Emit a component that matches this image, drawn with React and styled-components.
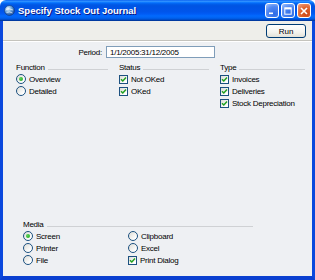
import React from "react";
import styled, { createGlobalStyle } from "styled-components";

const GlobalStyle = createGlobalStyle`
  html, body {
    margin: 0;
    padding: 0;
    background: #ffffff;
  }
  body {
    font-family: "Liberation Sans", Arial, sans-serif;
  }
`;

const Window = styled.div`
  width: 315px;
  height: 280px;
  display: flex;
  flex-direction: column;
`;

const TitleBar = styled.div`
  height: 21px;
  flex: none;
  display: flex;
  align-items: center;
  padding: 0 4px;
  border-radius: 6px 6px 0 0;
  background: linear-gradient(
    to bottom,
    #0058ee 0%,
    #3593ff 5%,
    #288eff 8%,
    #127dff 11%,
    #036ffc 14%,
    #0262ee 18%,
    #0057e5 24%,
    #0054e3 30%,
    #0055eb 56%,
    #005bf5 66%,
    #026afe 76%,
    #0062ef 86%,
    #0052d6 92%,
    #0040ab 96%,
    #003092 100%
  );
`;

const TitleText = styled.span`
  margin-left: 3px;
  color: #ffffff;
  font-weight: bold;
  font-size: 9.5px;
  text-shadow: 1px 1px 0 #0a1883;
  white-space: nowrap;
`;

const Controls = styled.div`
  margin-left: auto;
  display: flex;
  gap: 2px;
`;

const CtrlButton = styled.div`
  width: 14px;
  height: 15px;
  box-sizing: border-box;
  border: 1px solid #ffffff;
  border-radius: 3px;
  display: flex;
  align-items: center;
  justify-content: center;
  background: ${(p) =>
    p.$close
      ? "radial-gradient(circle at 70% 75%, #cc4616 0%, #e0652f 50%, #f3a78a 100%)"
      : "radial-gradient(circle at 70% 75%, #2d6be6 0%, #4f87f2 55%, #a8c6fb 100%)"};
`;

const Frame = styled.div`
  flex: 1;
  display: flex;
  flex-direction: column;
  border-left: 3px solid #0a48dd;
  border-right: 3px solid #0a48dd;
  border-bottom: 4px solid #0a3fd0;
  min-height: 0;
`;

const Toolbar = styled.div`
  height: 20px;
  flex: none;
  display: flex;
  justify-content: flex-end;
  align-items: flex-start;
  padding: 3px 6px 0 0;
  box-sizing: border-box;
  background: #eeeeea;
  border-bottom: 1px solid #c4c3bd;
`;

const RunButton = styled.div`
  width: 40px;
  height: 14px;
  box-sizing: border-box;
  border: 1px solid #003c74;
  border-radius: 3px;
  background: linear-gradient(to bottom, #ffffff 0%, #f4f3ee 60%, #e3e1d8 100%);
  font-size: 8px;
  color: #000;
  display: flex;
  align-items: center;
  justify-content: center;
`;

const Body = styled.div`
  flex: 1;
  display: flex;
  flex-direction: column;
  padding-top: 4px;
  background: #eef0f3;
  border-top: 1px solid #ffffff;
  font-size: 8px;
  letter-spacing: -0.25px;
  color: #000;
`;

const PeriodRow = styled.div`
  display: flex;
  align-items: center;
  height: 12px;
`;

const PeriodLabel = styled.span`
  width: 99px;
  text-align: right;
  margin-right: 4px;
`;

const Field = styled.div`
  width: 109px;
  height: 12px;
  box-sizing: border-box;
  border: 1px solid #7f9db9;
  background: #ffffff;
  padding-left: 3px;
  display: flex;
  align-items: center;
`;

const Sections = styled.div`
  margin-top: 4px;
  padding: 0 7px 0 13px;
  display: grid;
  grid-template-columns: 92px 90px 1fr;
  column-gap: 11px;
`;

const Group = styled.div`
  display: flex;
  flex-direction: column;
`;

const Header = styled.div`
  height: 11px;
  display: flex;
  align-items: center;
`;

const HeaderLine = styled.div`
  flex: 1;
  height: 1px;
  margin: 3px 0 0 3px;
  background: #cfd1d4;
`;

const Option = styled.div`
  height: 12px;
  display: flex;
  align-items: center;
  gap: 3px;
  white-space: nowrap;
`;

const Radio = styled.span`
  width: 10px;
  height: 10px;
  box-sizing: border-box;
  border: 1px solid #1c5180;
  border-radius: 50%;
  background: linear-gradient(135deg, #dcdcd6 0%, #ffffff 80%);
  display: flex;
  align-items: center;
  justify-content: center;
  flex: none;

  &::after {
    content: "";
    width: 4px;
    height: 4px;
    border-radius: 50%;
    background: radial-gradient(circle at 35% 35%, #55d455, #21a121);
    display: ${(p) => (p.$on ? "block" : "none")};
  }
`;

const Box = styled.span`
  width: 9px;
  height: 9px;
  box-sizing: border-box;
  border: 1px solid #1c5180;
  background: linear-gradient(135deg, #dcdcd6 0%, #ffffff 80%);
  display: flex;
  align-items: center;
  justify-content: center;
  flex: none;
`;

const Media = styled.div`
  margin-top: auto;
  margin-left: 20px;
  width: 230px;
  padding-bottom: 10px;
`;

const MediaGrid = styled.div`
  display: grid;
  grid-template-columns: 105px 1fr;
  grid-auto-rows: 12px;
`;

const Check = () => (
  <Box>
    <svg width="7" height="7" viewBox="0 0 7 7">
      <path d="M1 3.2 L2.8 5 L6 1.5" fill="none" stroke="#21a121" strokeWidth="1.5" />
    </svg>
  </Box>
);

const RadioOption = ({ on, children }) => (
  <Option>
    <Radio $on={on} />
    {children}
  </Option>
);

const CheckOption = ({ children }) => (
  <Option>
    <Check />
    {children}
  </Option>
);

const GroupHeader = ({ children }) => (
  <Header>
    {children}
    <HeaderLine />
  </Header>
);

const AppIcon = () => (
  <svg width="11" height="11" viewBox="0 0 11 11">
    <defs>
      <radialGradient id="glb" cx="35%" cy="30%" r="70%">
        <stop offset="0%" stopColor="#e8f4ff" />
        <stop offset="50%" stopColor="#6fa8dc" />
        <stop offset="100%" stopColor="#1e4f9c" />
      </radialGradient>
    </defs>
    <circle cx="5.5" cy="5.5" r="5" fill="url(#glb)" stroke="#0d3a82" strokeWidth="0.6" />
    <path d="M2 4.5 Q5 3 9 5 M2.5 7.5 Q5.5 6 8.5 8" stroke="#ffffff" strokeWidth="0.8" fill="none" opacity="0.8" />
  </svg>
);

export default function App() {
  return (
    <>
      <GlobalStyle />
      <Window>
        <TitleBar>
          <AppIcon />
          <TitleText>Specify Stock Out Journal</TitleText>
          <Controls>
            <CtrlButton>
              <svg width="8" height="8" viewBox="0 0 8 8">
                <rect x="1" y="5.5" width="4" height="1.6" fill="#fff" />
              </svg>
            </CtrlButton>
            <CtrlButton>
              <svg width="8" height="8" viewBox="0 0 8 8">
                <rect x="0.8" y="0.8" width="6.4" height="6.4" fill="none" stroke="#fff" strokeWidth="1" />
                <rect x="0.8" y="0.8" width="6.4" height="1.6" fill="#fff" />
              </svg>
            </CtrlButton>
            <CtrlButton $close>
              <svg width="8" height="8" viewBox="0 0 8 8">
                <path d="M1 1 L7 7 M7 1 L1 7" stroke="#fff" strokeWidth="1.6" />
              </svg>
            </CtrlButton>
          </Controls>
        </TitleBar>
        <Frame>
          <Toolbar>
            <RunButton>Run</RunButton>
          </Toolbar>
          <Body>
            <PeriodRow>
              <PeriodLabel>Period:</PeriodLabel>
              <Field>1/1/2005:31/12/2005</Field>
            </PeriodRow>
            <Sections>
              <Group>
                <GroupHeader>Function</GroupHeader>
                <RadioOption on>Overview</RadioOption>
                <RadioOption>Detailed</RadioOption>
              </Group>
              <Group>
                <GroupHeader>Status</GroupHeader>
                <CheckOption>Not OKed</CheckOption>
                <CheckOption>OKed</CheckOption>
              </Group>
              <Group>
                <GroupHeader>Type</GroupHeader>
                <CheckOption>Invoices</CheckOption>
                <CheckOption>Deliveries</CheckOption>
                <CheckOption>Stock Depreciation</CheckOption>
              </Group>
            </Sections>
            <Media>
              <GroupHeader>Media</GroupHeader>
              <MediaGrid>
                <RadioOption on>Screen</RadioOption>
                <RadioOption>Clipboard</RadioOption>
                <RadioOption>Printer</RadioOption>
                <RadioOption>Excel</RadioOption>
                <RadioOption>File</RadioOption>
                <CheckOption>Print Dialog</CheckOption>
              </MediaGrid>
            </Media>
          </Body>
        </Frame>
      </Window>
    </>
  );
}
